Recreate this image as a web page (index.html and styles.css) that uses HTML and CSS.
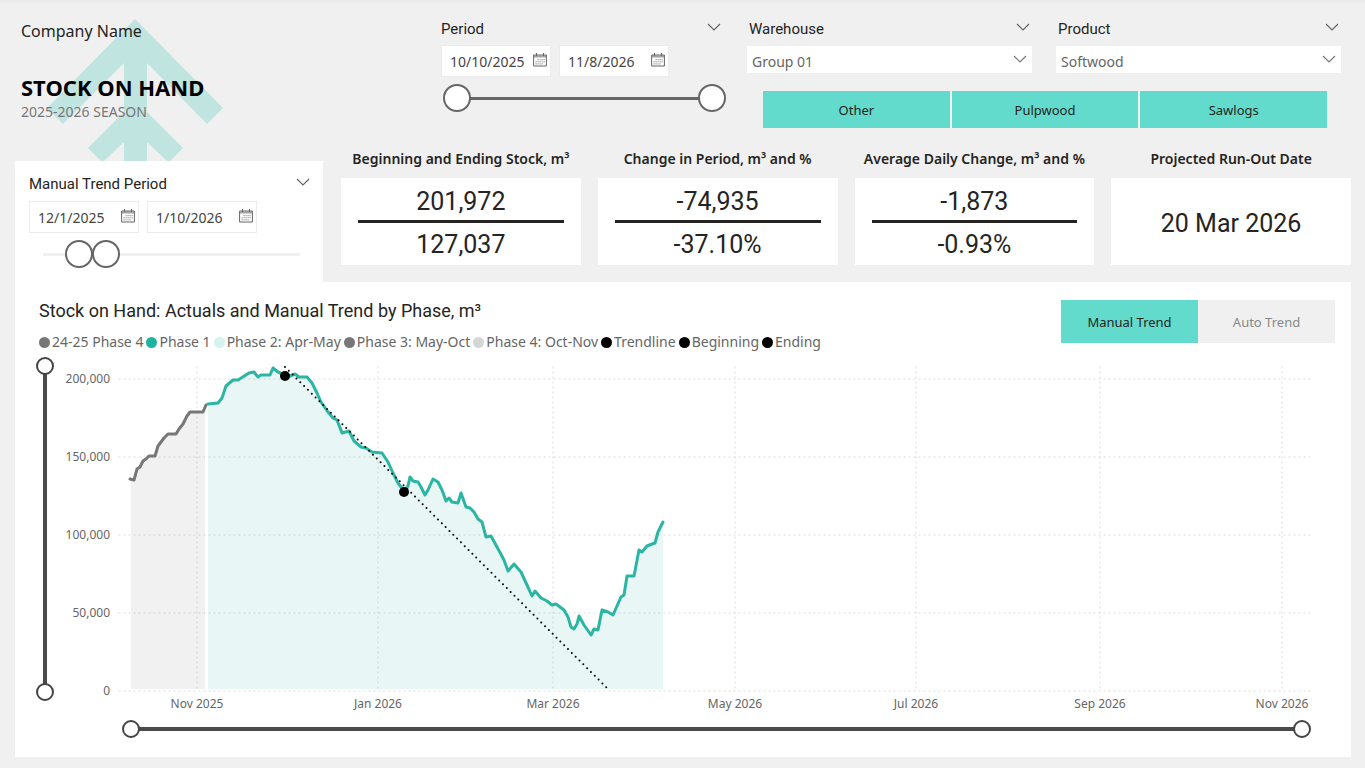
FILE: index.html
```html
<!DOCTYPE html>
<html lang="en">
<head>
    <meta charset="UTF-8">
    <meta name="viewport" content="width=device-width, initial-scale=1.0">
    <title>Stock on Hand</title>
    <link rel="stylesheet" href="styles.css">
</head>
<body>

<svg class="symbols" aria-hidden="true">
    <symbol id="icon-chevron" viewBox="0 0 14 8">
        <path d="M1 1l6 6 6-6" fill="none" stroke="currentColor" stroke-width="1.2"/>
    </symbol>
    <symbol id="icon-calendar" viewBox="0 0 14 14">
        <path d="M.6 2h12.8v11H.6zM3.5 0v3M10.5 0v3" fill="none" stroke="currentColor"/>
        <path d="M1 3.500H13" fill="none" stroke="currentColor" stroke-width="2" opacity=".6"/>
        <path d="M4.500 6.700H12M2.500 8.800H12M2.500 10.900H10" fill="none" stroke="currentColor" stroke-dasharray="1.200 .8" opacity=".8"/>
    </symbol>
</svg>

<main class="report">
    <header class="top">
        <div class="side">
            <div class="brand">
                <svg class="brand-logo" viewBox="0 0 176 142" aria-hidden="true">
                    <path d="M88 0L176 89L160 105L100 44V93L136 129L123 142H120L100 123V142H77V123L57 142H54L41 129L77 93V44L16 105L0 89Z"/>
                </svg>
                <p class="company">Company Name</p>
                <h1>STOCK ON HAND</h1>
                <p class="season">2025-2026 SEASON</p>
            </div>
            <section class="trend-period">
                <div class="filter-head">
                    <h2>Manual Trend Period</h2>
                    <button class="toggle" aria-label="Collapse manual trend period"><svg><use href="#icon-chevron"/></svg></button>
                </div>
                <div class="dates">
                    <label class="date"><input type="text" value="12/1/2025" aria-label="Trend start"><svg><use href="#icon-calendar"/></svg></label>
                    <label class="date"><input type="text" value="1/10/2026" aria-label="Trend end"><svg><use href="#icon-calendar"/></svg></label>
                </div>
                <div class="range">
                    <input type="range" min="0" max="257" value="36" aria-label="Trend start">
                    <input type="range" min="0" max="257" value="63" aria-label="Trend end">
                </div>
            </section>
        </div>

        <div class="overview">
            <div class="filters">
                <section class="period">
                    <div class="filter-head">
                        <h2>Period</h2>
                        <button class="toggle" aria-label="Collapse period"><svg><use href="#icon-chevron"/></svg></button>
                    </div>
                    <div class="dates">
                        <label class="date"><input type="text" value="10/10/2025" aria-label="Period start"><svg><use href="#icon-calendar"/></svg></label>
                        <label class="date"><input type="text" value="11/8/2026" aria-label="Period end"><svg><use href="#icon-calendar"/></svg></label>
                    </div>
                    <div class="range range-full">
                        <input type="range" min="0" max="394" value="0" aria-label="Period start">
                        <input type="range" min="0" max="394" value="394" aria-label="Period end">
                    </div>
                </section>
                <section>
                    <div class="filter-head">
                        <h2><label for="warehouse">Warehouse</label></h2>
                        <button class="toggle" aria-label="Collapse warehouse"><svg><use href="#icon-chevron"/></svg></button>
                    </div>
                    <div class="select">
                        <select id="warehouse"><option>Group 01</option></select>
                        <svg><use href="#icon-chevron"/></svg>
                    </div>
                </section>
                <section>
                    <div class="filter-head">
                        <h2><label for="product">Product</label></h2>
                        <button class="toggle" aria-label="Collapse product"><svg><use href="#icon-chevron"/></svg></button>
                    </div>
                    <div class="select">
                        <select id="product"><option>Softwood</option></select>
                        <svg><use href="#icon-chevron"/></svg>
                    </div>
                </section>
                <div class="products">
                    <button>Other</button>
                    <button>Pulpwood</button>
                    <button>Sawlogs</button>
                </div>
            </div>

            <div class="kpis">
                <section class="kpi">
                    <h3>Beginning and Ending Stock, m³</h3>
                    <div class="card"><p>201,972</p><hr><p>127,037</p></div>
                </section>
                <section class="kpi">
                    <h3>Change in Period, m³ and %</h3>
                    <div class="card"><p>-74,935</p><hr><p>-37.10%</p></div>
                </section>
                <section class="kpi">
                    <h3>Average Daily Change, m³ and %</h3>
                    <div class="card"><p>-1,873</p><hr><p>-0.93%</p></div>
                </section>
                <section class="kpi">
                    <h3>Projected Run-Out Date</h3>
                    <div class="card"><p>20 Mar 2026</p></div>
                </section>
            </div>
        </div>
    </header>

    <section class="panel">
        <div class="panel-head">
            <div>
                <h2>Stock on Hand: Actuals and Manual Trend by Phase, m³</h2>
                <ul class="legend">
                    <li class="grey">24-25 Phase 4</li>
                    <li class="teal">Phase 1</li>
                    <li class="mint">Phase 2: Apr-May</li>
                    <li class="grey">Phase 3: May-Oct</li>
                    <li class="silver">Phase 4: Oct-Nov</li>
                    <li>Trendline</li>
                    <li>Beginning</li>
                    <li>Ending</li>
                </ul>
            </div>
            <div class="switch">
                <button class="active">Manual Trend</button>
                <button>Auto Trend</button>
            </div>
        </div>

        <div class="chart">
            <div class="zoom zoom-y">
                <input type="range" value="0" aria-label="Value axis minimum">
                <input type="range" value="100" aria-label="Value axis maximum">
            </div>
            <svg class="plot" viewBox="60 357 1275 358" role="img" aria-label="Stock on hand by date">
                <g class="grid">
                    <path d="M119 379H1310M119 457H1310M119 535H1310M119 613H1310M119 691H1310"/>
                    <path d="M197 367V691M378 367V691M553 367V691M735 367V691M916 367V691M1100 367V691M1282 367V691"/>
                </g>
                <path class="area-grey" d="M131 480L134 480L137 469L140 467L143 461L146 459L149 456L155 456L158 446L164 438L168 434L176 434L179 429L183 424L187 416L190 412L203 412L205 405V689H131Z"/>
                <path class="area-teal" d="M208 404L218 403L222 398L226 386L233 380L238 380L249 373L254 372L258 377L261 375L270 375L273 368L278 372L285 375L290 376L295 374L299 377L307 377L312 383L317 393L321 402L328 412L333 418L337 420L342 433L349 431L354 441L361 447L366 448L372 452L382 453L388 462L393 473L398 483L404 491L408 486L410 477L413 481L418 482L421 487L425 495L428 490L433 479L438 482L442 490L446 501L449 498L452 502L458 503L461 493L466 507L470 508L474 512L478 519L482 522L486 537L491 536L497 547L504 560L508 571L514 564L521 572L527 585L532 596L535 591L541 598L547 601L552 605L556 604L564 610L568 617L571 627L574 629L577 624L579 616L584 625L591 635L594 629L598 630L602 610L608 612L613 615L617 606L621 597L624 595L627 576L634 576L639 550L642 552L647 546L652 544L655 543L658 532L663 522V689H208Z"/>
                <path class="line-grey" d="M130 479L134 480L137 469L140 467L143 461L146 459L149 456L155 456L158 446L164 438L168 434L176 434L179 429L183 424L187 416L190 412L203 412L206 405"/>
                <path class="line-teal" d="M208 404L218 403L222 398L226 386L233 380L238 380L249 373L254 372L258 377L261 375L270 375L273 368L278 372L285 375L290 376L295 374L299 377L307 377L312 383L317 393L321 402L328 412L333 418L337 420L342 433L349 431L354 441L361 447L366 448L372 452L382 453L388 462L393 473L398 483L404 491L408 486L410 477L413 481L418 482L421 487L425 495L428 490L433 479L438 482L442 490L446 501L449 498L452 502L458 503L461 493L466 507L470 508L474 512L478 519L482 522L486 537L491 536L497 547L504 560L508 571L514 564L521 572L527 585L532 596L535 591L541 598L547 601L552 605L556 604L564 610L568 617L571 627L574 629L577 624L579 616L584 625L591 635L594 629L598 630L602 610L608 612L613 615L617 606L621 597L624 595L627 576L634 576L639 550L642 552L647 546L652 544L655 543L658 532L663 522"/>
                <path class="trendline" d="M285 367L608 689" stroke-dasharray="0 5.400"/>
                <circle cx="285" cy="376" r="5"/>
                <circle cx="404" cy="492" r="5"/>
                <g class="labels-y">
                    <text x="110" y="383">200,000</text>
                    <text x="110" y="461">150,000</text>
                    <text x="110" y="539">100,000</text>
                    <text x="110" y="617">50,000</text>
                    <text x="110" y="695">0</text>
                </g>
                <g class="labels-x">
                    <text x="197" y="708">Nov 2025</text>
                    <text x="378" y="708">Jan 2026</text>
                    <text x="553" y="708">Mar 2026</text>
                    <text x="735" y="708">May 2026</text>
                    <text x="916" y="708">Jul 2026</text>
                    <text x="1100" y="708">Sep 2026</text>
                    <text x="1282" y="708">Nov 2026</text>
                </g>
            </svg>
        </div>
        <div class="zoom zoom-x">
            <input type="range" value="0" aria-label="Date axis start">
            <input type="range" value="100" aria-label="Date axis end">
        </div>
    </section>
</main>

</body>
</html>
```
FILE: styles.css
```css
* {
    box-sizing: border-box;
}

body {
    margin: 0;
    min-height: 100vh;
    background: linear-gradient(#e8e8e8, #f0f0f0 5px);
    font-family: "Noto Sans", "Open Sans", sans-serif;
    font-size: 14px;
    color: #252423;
}

h1, h2, h3, p, ul {
    margin: 0;
    padding: 0;
}

button, input, select {
    font: inherit;
    color: inherit;
}

button {
    border: none;
    padding: 0;
    font-size: 13px;
    cursor: pointer;
}

.symbols {
    display: none;
}

.report {
    padding: 0 14px 11px 15px;
}

.top {
    display: grid;
    grid-template-columns: 308px 1fr;
    gap: 18px;
}

/* brand */
.side {
    display: flex;
    flex-direction: column;
}

.brand {
    position: relative;
    height: 161px;
    padding: 19px 0 0 6px;
}

.brand-logo {
    position: absolute;
    left: 32px;
    top: 19px;
    width: 176px;
    height: 142px;
    fill: #c0e4e0;
}

.company, h1, .season {
    position: relative;
}

.company {
    font-size: 16px;
    line-height: 24px;
}

h1 {
    margin-top: 28px;
    font-size: 22px;
    line-height: 32px;
    color: #000;
}

.season {
    line-height: 18px;
    color: #777;
}

.trend-period {
    flex: 1;
    padding: 14px 11px 0 14px;
    background: #fff;
}

/* filters */
.filters {
    display: grid;
    grid-template-columns: 282px 1fr 1fr;
    grid-template-rows: 53px 37px;
    gap: 18px 24px;
    margin: 20px 10px 0 100px;
}

.period {
    grid-row: span 2;
}

.filter-head {
    display: flex;
    justify-content: space-between;
    height: 26px;
    padding-left: 2px;
}

.period .filter-head, .trend-period .filter-head {
    padding-left: 0;
}

.period .filter-head {
    height: 25px;
}

h2 {
    font-family: Roboto, sans-serif;
    font-size: 15px;
    font-weight: 400;
    line-height: 18px;
}

.toggle {
    width: 14px;
    height: 14px;
    margin-right: 2px;
    background: none;
    color: #666;
}

.toggle svg {
    display: block;
    width: 14px;
    height: 8px;
}

.dates {
    display: flex;
    gap: 8px;
}

.date {
    display: flex;
    align-items: center;
    width: 110px;
    height: 32px;
    padding: 0 3px 0 8px;
    background: #fff;
    border: 1px solid #ececec;
}

.date input {
    flex: 1;
    min-width: 0;
    padding: 0;
    border: none;
    background: none;
    color: #444;
}

.date svg {
    width: 14px;
    height: 14px;
    margin-bottom: 3px;
    color: #666;
}

.select {
    position: relative;
}

.select select {
    display: block;
    width: 100%;
    height: 27px;
    padding: 3px 5px 0;
    appearance: none;
    border: none;
    border-radius: 0;
    background: #fff;
    color: #666;
}

.select svg {
    position: absolute;
    right: 5px;
    top: 9px;
    width: 14px;
    height: 8px;
    color: #777;
    pointer-events: none;
}

.products {
    grid-column: 2 / 4;
    display: flex;
    gap: 2px;
    padding: 0 14px 0 16px;
}

.products button {
    flex: 1;
    background: #62dbcc;
}

/* two-handle sliders: both inputs share one track */
.range, .zoom {
    position: relative;
}

.range {
    height: 28px;
    margin-top: 7px;
}

.period .range {
    margin-left: 2px;
    margin-right: -3px;
}

.trend-period .range {
    margin-right: -2px;
}

.range::before, .zoom::before {
    content: "";
    position: absolute;
}

.range::before {
    left: 14px;
    right: 14px;
    top: 13px;
    height: 3px;
    background: #f0f0f0;
}

.range-full::before {
    background: #666;
}

.range input, .zoom input {
    position: absolute;
    left: 0;
    top: 0;
    width: 100%;
    height: 100%;
    margin: 0;
    appearance: none;
    background: none;
    pointer-events: none;
}

.range input::-webkit-slider-thumb {
    appearance: none;
    width: 28px;
    height: 28px;
    border: 2px solid #666;
    border-radius: 50%;
    background: #fff;
    pointer-events: auto;
}

.zoom input::-webkit-slider-thumb {
    appearance: none;
    width: 18px;
    height: 18px;
    border: 2px solid #444;
    border-radius: 50%;
    background: #fff;
    pointer-events: auto;
}

/* kpi cards */
.kpis {
    display: grid;
    grid-template-columns: repeat(4, 1fr);
    gap: 17px;
    margin: 22px 0 17px;
}

.kpi h3 {
    font-size: 14px;
    font-weight: 600;
    line-height: 18px;
    margin-bottom: 10px;
    text-align: center;
    white-space: nowrap;
}

.card {
    display: flex;
    flex-direction: column;
    justify-content: center;
    height: 87px;
    padding: 4px 17px 0;
    background: #fff;
    text-align: center;
}

.card p {
    font-family: Roboto, sans-serif;
    font-size: 25px;
    line-height: 36px;
}

.card hr {
    width: 100%;
    height: 3px;
    margin: 0 0 4px;
    border: none;
    background: #252423;
}

/* chart */
.panel {
    padding: 18px 16px 19px 20px;
    background: #fff;
}

.panel-head {
    display: flex;
    justify-content: space-between;
    align-items: flex-start;
}

.panel-head h2 {
    padding-left: 4px;
    font-size: 18px;
    line-height: 22px;
}

.legend {
    display: flex;
    gap: 3px;
    margin-top: 10px;
    padding-left: 4px;
    list-style: none;
    line-height: 20px;
    color: #666;
}

.legend li::before {
    content: "";
    display: inline-block;
    width: 11px;
    height: 11px;
    margin-right: 2px;
    border-radius: 50%;
    background: #000;
    vertical-align: -1px;
}

.legend .grey::before {
    background: #777;
}

.legend .teal::before {
    background: #20b2a0;
}

.legend .mint::before {
    background: #d5f3f0;
}

.legend .silver::before {
    background: #d6d6d6;
}

.switch {
    display: flex;
}

.switch button {
    width: 137px;
    height: 43px;
    background: #f0f0f0;
    color: #888;
}

.switch .active {
    background: #62dbcc;
    color: #252423;
}

.chart {
    display: flex;
    align-items: flex-start;
    gap: 5px;
    margin-top: 5px;
}

.zoom-y {
    width: 20px;
    height: 344px;
}

.zoom-y input {
    writing-mode: vertical-lr;
    direction: rtl;
}

.zoom-y::before {
    left: 8px;
    top: 9px;
    bottom: 9px;
    width: 4px;
    background: #4a4a4a;
}

.zoom-x {
    height: 18px;
    margin: 5px 24px 0 87px;
}

.zoom-x::before {
    left: 9px;
    right: 9px;
    top: 7px;
    height: 4px;
    background: #4a4a4a;
}

.plot {
    flex: 1;
    min-width: 0;
    font-size: 12px;
}

.plot path {
    fill: none;
    stroke-linejoin: round;
}

.plot .grid path {
    stroke: #dcdcdc;
    stroke-dasharray: 1 4;
    stroke-linecap: square;
}

.plot .area-grey {
    fill: rgba(119, 119, 119, 0.1);
}

.plot .area-teal {
    fill: rgba(32, 178, 170, 0.1);
}

.plot .line-grey, .plot .line-teal {
    stroke: #777;
    stroke-width: 3;
    stroke-linecap: round;
}

.plot .line-teal {
    stroke: #2bb5a3;
}

.plot .trendline {
    stroke: #000;
    stroke-width: 2;
    stroke-linecap: round;
}

.plot text {
    fill: #666;
}

.labels-y {
    text-anchor: end;
}

.labels-x {
    text-anchor: middle;
}
```
